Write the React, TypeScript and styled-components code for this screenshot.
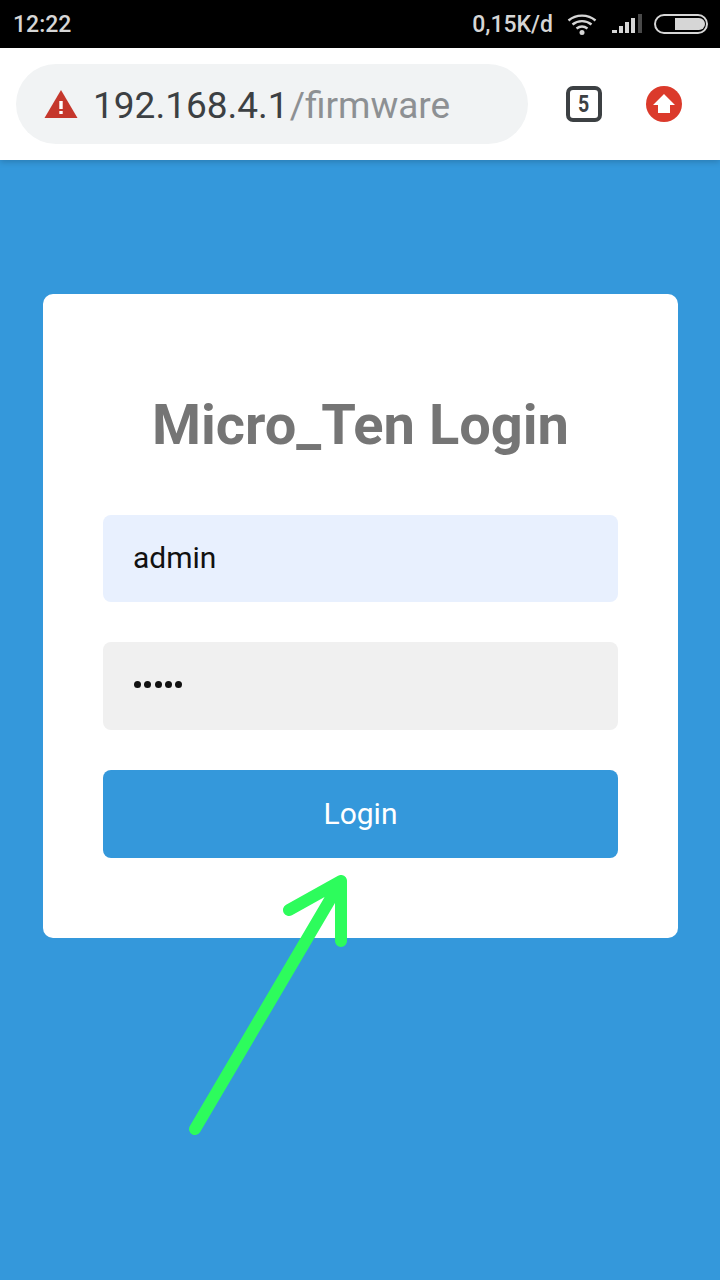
import React from 'react';
import styled, { createGlobalStyle } from 'styled-components';

const GlobalStyle = createGlobalStyle`
  html, body {
    margin: 0;
    padding: 0;
    background: #3498db;
    font-family: Roboto, "Liberation Sans", sans-serif;
  }
`;

const Page = styled.div`
  position: relative;
  width: 720px;
  height: 1280px;
  overflow: hidden;
  background: #3498db;
  display: flex;
  flex-direction: column;
`;

const StatusBar = styled.div`
  height: 48px;
  background: #000;
  color: #d6d6d6;
  display: flex;
  align-items: center;
  justify-content: space-between;
  padding: 0 12px 0 13px;
  font-size: 23px;
  font-weight: 500;
  flex-shrink: 0;
`;

const StatusRight = styled.div`
  display: flex;
  align-items: center;
`;

const Speed = styled.span`
  margin-right: 14px;
`;

const UrlBar = styled.div`
  height: 112px;
  background: #fff;
  display: flex;
  align-items: center;
  padding: 0 38px 0 16px;
  flex-shrink: 0;
  box-shadow: 0 2px 6px rgba(0, 0, 0, 0.18);
  z-index: 1;
`;

const Omnibox = styled.div`
  width: 512px;
  height: 80px;
  border-radius: 40px;
  background: #f1f3f4;
  display: flex;
  align-items: center;
  padding-left: 28px;
  box-sizing: border-box;
  font-size: 37px;
  color: #3c4043;
`;

const UrlText = styled.span`
  margin-left: 15px;
  padding-top: 2px;
`;

const Path = styled.span`
  color: #8d9093;
  margin-left: 1px;
`;

const TabCount = styled.div`
  width: 36px;
  height: 36px;
  margin-left: 38px;
  box-sizing: border-box;
  border: 4px solid #3c4043;
  border-radius: 7px;
  display: flex;
  align-items: center;
  justify-content: center;
  font-size: 23px;
  font-weight: 700;
  color: #3c4043;
`;

const TabDigit = styled.span`
  display: block;
  transform: scaleX(0.85);
`;

const UpdateBadge = styled.div`
  width: 36px;
  height: 36px;
  margin-left: auto;
`;

const Content = styled.main`
  flex: 1;
  padding: 134px 42px 0 43px;
`;

const Card = styled.form`
  width: 635px;
  height: 644px;
  box-sizing: border-box;
  background: #fff;
  border-radius: 10px;
  padding: 100px 60px 0;
  display: flex;
  flex-direction: column;
`;

const Title = styled.h1`
  margin: 0 0 59px;
  height: 62px;
  line-height: 62px;
  text-align: center;
  font-size: 56px;
  font-weight: 700;
  color: #757575;
`;

const Field = styled.div<{ $bg: string; $height: number }>`
  height: ${(p) => p.$height}px;
  box-sizing: border-box;
  border-radius: 8px;
  background: ${(p) => p.$bg};
  margin-bottom: 40px;
  padding: 0 0 2px 30px;
  display: flex;
  align-items: center;
  font-size: 30px;
  color: #111;
`;

const Dots = styled.div`
  display: flex;
  gap: 3.25px;
  margin: -2px 0 0 1px;
`;

const Dot = styled.span`
  width: 7px;
  height: 7px;
  border-radius: 50%;
  background: #111;
`;

const LoginButton = styled.button`
  height: 88px;
  border: none;
  border-radius: 8px;
  background: #3498db;
  color: #fff;
  font-family: inherit;
  font-size: 30px;
  padding: 0 0 2px;
`;

const ArrowOverlay = styled.svg`
  position: absolute;
  left: 0;
  top: 0;
  pointer-events: none;
`;

function App(): React.ReactElement {
  return (
    <Page>
      <GlobalStyle />
      <StatusBar>
        <span>12:22</span>
        <StatusRight>
          <Speed>0,15K/d</Speed>
          <svg width="30" height="22" viewBox="0 0 30 22" fill="none">
            <path d="M1.5 7.5 C9 1 21 1 28.5 7.5" stroke="#d6d6d6" strokeWidth="2.4" />
            <path d="M5.5 11.5 C11 7 19 7 24.5 11.5" stroke="#d6d6d6" strokeWidth="2.4" />
            <path d="M9.5 15.5 C13 13 17 13 20.5 15.5" stroke="#d6d6d6" strokeWidth="2.4" />
            <circle cx="15" cy="19.5" r="2.5" fill="#d6d6d6" />
          </svg>
          <svg width="30" height="20" viewBox="0 0 30 20" style={{ marginLeft: 15 }}>
            <rect x="0" y="16" width="5" height="3" fill="#d6d6d6" />
            <rect x="7" y="12" width="4" height="7" fill="#d6d6d6" />
            <rect x="13" y="8" width="4" height="11" fill="#d6d6d6" />
            <rect x="19" y="4" width="4" height="15" fill="#d6d6d6" />
            <rect x="26" y="0" width="4" height="19" fill="#4a4a4a" />
          </svg>
          <svg width="54" height="20" viewBox="0 0 54 20" style={{ marginLeft: 12 }}>
            <rect x="1" y="1" width="52" height="18" rx="9" fill="none" stroke="#d6d6d6" strokeWidth="2" />
            <path d="M21 4 H45 a6 6 0 0 1 0 12 H21 Z" fill="#d6d6d6" />
          </svg>
        </StatusRight>
      </StatusBar>
      <UrlBar>
        <Omnibox>
          <svg width="34" height="30" viewBox="0 0 34 30">
            <path d="M17 1 L33.5 29 H0.5 Z" fill="#c5372c" />
            <rect x="15.3" y="12" width="3.4" height="8" fill="#fff" />
            <rect x="15.3" y="22" width="3.4" height="3" fill="#fff" />
          </svg>
          <UrlText>
            192.168.4.1
            <Path>/firmware</Path>
          </UrlText>
        </Omnibox>
        <TabCount>
          <TabDigit>5</TabDigit>
        </TabCount>
        <UpdateBadge>
          <svg width="36" height="36" viewBox="0 0 36 36">
            <circle cx="18" cy="18" r="18" fill="#db3a2b" />
            <path d="M18 8 L29 19 H24 V27 H12 V19 H7 Z" fill="#fff" />
          </svg>
        </UpdateBadge>
      </UrlBar>
      <Content>
        <Card>
          <Title>Micro_Ten Login</Title>
          <Field $bg="#e8f0fe" $height={87}>admin</Field>
          <Field $bg="#f0f0f0" $height={88}>
            <Dots>
              <Dot />
              <Dot />
              <Dot />
              <Dot />
              <Dot />
            </Dots>
          </Field>
          <LoginButton type="button">Login</LoginButton>
        </Card>
      </Content>
      <ArrowOverlay width="720" height="1280" viewBox="0 0 720 1280" fill="none">
        <path
          d="M195 1129 L341 881 M289 910 L341 881 L341 941"
          stroke="#2dfc5c"
          strokeWidth="12"
          strokeLinecap="round"
          strokeLinejoin="round"
        />
      </ArrowOverlay>
    </Page>
  );
}

export default App;
